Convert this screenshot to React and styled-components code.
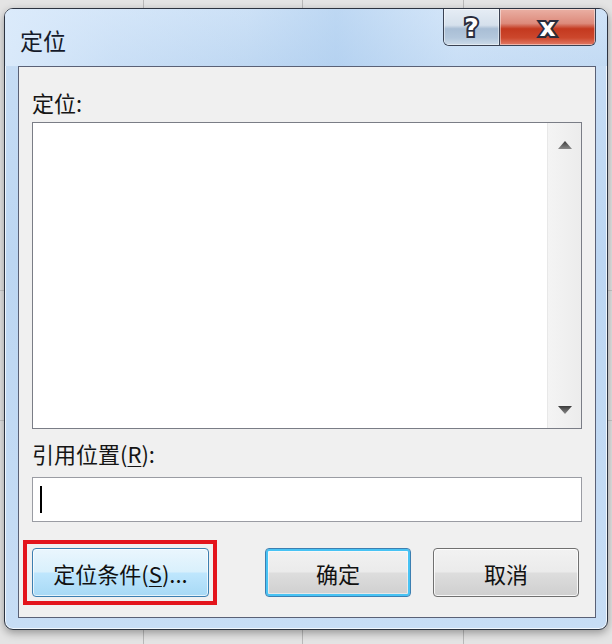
import React from "react";
import styled, { createGlobalStyle } from "styled-components";

const Global = createGlobalStyle`
  html, body { margin: 0; padding: 0; }
  body {
    font-family: "Noto Sans CJK SC", "Liberation Sans", sans-serif;
    background-color: #e4e4e4;
    background-image:
      linear-gradient(#b9b9b9, #b9b9b9),
      linear-gradient(#b9b9b9, #b9b9b9),
      linear-gradient(#b9b9b9, #b9b9b9),
      linear-gradient(#c8c8c8, #c8c8c8),
      linear-gradient(#c8c8c8, #c8c8c8);
    background-size: 1px 100%, 1px 100%, 1px 100%, 100% 1px, 100% 1px;
    background-position: 143px 0, 302px 0, 463px 0, 0 290px, 0 420px;
    background-repeat: no-repeat;
  }
`;

const Page = styled.div`
  width: 612px;
  height: 644px;
  box-sizing: border-box;
  padding: 8px 4px 0 4px;
`;

const Window = styled.div`
  width: 604px;
  height: 622px;
  box-sizing: border-box;
  border: 1px solid #2c3340;
  border-radius: 9px;
  background: linear-gradient(180deg, #c9def5 0%, #bcd6f2 40%, #c7ddf5 100%);
  box-shadow: inset 0 0 0 1px rgba(255, 255, 255, 0.75), 0 3px 8px rgba(0, 0, 0, 0.35);
  display: flex;
  flex-direction: column;
  overflow: hidden;
`;

const TitleBar = styled.div`
  height: 57px;
  flex: none;
  display: flex;
  justify-content: space-between;
  align-items: flex-start;
  background:
    linear-gradient(90deg, rgba(220, 235, 251, 0.9) 0%, rgba(214, 231, 250, 0.4) 18%, rgba(180, 209, 240, 0.2) 40%, rgba(168, 202, 238, 0.5) 55%, rgba(214, 231, 250, 0.3) 75%, rgba(196, 219, 244, 0.2) 100%),
    linear-gradient(180deg, #d3e5f8 0%, #c2daf3 100%);
`;

const Title = styled.div`
  margin: 16px 0 0 15px;
  font-size: 23px;
  line-height: 30px;
  color: #151a2a;
`;

const CaptionGroup = styled.div`
  display: flex;
  margin-right: 11px;
  border: 1px solid #3a4253;
  border-top: none;
  border-radius: 0 0 6px 6px;
  overflow: hidden;
`;

const CaptionButton = styled.div`
  width: ${(p) => p.$w}px;
  height: 36px;
  display: flex;
  align-items: center;
  justify-content: center;
  font-family: "DejaVu Sans", sans-serif;
  font-weight: bold;
  font-size: ${(p) => p.$fs}px;
  color: #ffffff;
  -webkit-text-stroke: 4px #2a2d3d;
  paint-order: stroke fill;
  border-left: ${(p) => (p.$sep ? "1px solid #3a4253" : "none")};
  box-shadow: inset 0 0 0 1px rgba(255, 255, 255, 0.45);
  background: ${(p) =>
    p.$close
      ? "linear-gradient(180deg, #eab0a4 0%, #dd8a7b 40%, #c4391f 55%, #cc472c 80%, #e27a66 100%)"
      : "linear-gradient(180deg, #e6edf5 0%, #d5e0ec 45%, #a9bed5 55%, #b3c7dc 80%, #cddbe9 100%)"};
`;

const Client = styled.div`
  flex: 1;
  margin: 0 11px 11px 13px;
  border: 1px solid #5a6176;
  background: #f0f0f0;
  padding: 20px 13px 0 13px;
  display: flex;
  flex-direction: column;
`;

const Label = styled.div`
  font-size: 22px;
  line-height: 30px;
  color: #151515;
  margin-top: ${(p) => p.$mt || 0}px;
  u { text-decoration-thickness: 1px; text-underline-offset: 3px; }
`;

const ListBox = styled.div`
  margin-top: 5px;
  height: 307px;
  box-sizing: border-box;
  border: 1px solid #7a7d86;
  background: #ffffff;
  display: flex;
  justify-content: flex-end;
`;

const ScrollBar = styled.div`
  width: 33px;
  border-left: 1px solid #e8e8e8;
  background: linear-gradient(90deg, #f4f4f4, #ececec);
  display: flex;
  flex-direction: column;
  justify-content: space-between;
  align-items: center;
  padding: 18px 0 14px 0;
`;

const Arrow = styled.svg`
  width: 14px;
  height: 8px;
  display: block;
`;

const InputBox = styled.div`
  margin-top: 9px;
  height: 45px;
  box-sizing: border-box;
  border: 1px solid #9a9ca3;
  background: #ffffff;
  display: flex;
  align-items: center;
  padding-left: 7px;
`;

const Caret = styled.div`
  width: 2px;
  height: 27px;
  background: #000;
`;

const ButtonRow = styled.div`
  margin-top: 26px;
  display: flex;
  align-items: center;
`;

const Button = styled.div`
  position: relative;
  width: ${(p) => p.$w}px;
  height: 49px;
  box-sizing: border-box;
  margin-left: ${(p) => p.$ml || 0}px;
  border-radius: 4px;
  display: flex;
  align-items: center;
  justify-content: center;
  font-size: 22px;
  color: #111;
  u { text-decoration-thickness: 1px; text-underline-offset: 3px; }
  ${(p) =>
    p.$variant === "hot"
      ? `
    border: 1px solid #3c7fb1;
    background: linear-gradient(180deg, #eaf6fd 0%, #d9f0fc 48%, #bee6fd 52%, #a7d9f5 100%);
    box-shadow: inset 0 0 0 1px rgba(255,255,255,0.7);
  `
      : p.$variant === "default"
      ? `
    border: 1px solid #3c7fb1;
    background: linear-gradient(180deg, #f2f2f2 0%, #ebebeb 48%, #dddddd 52%, #cfcfcf 100%);
    box-shadow: inset 0 0 0 2px #48c3f4, inset 0 0 0 3px rgba(255,255,255,0.5);
  `
      : `
    border: 1px solid #707070;
    background: linear-gradient(180deg, #f2f2f2 0%, #ebebeb 48%, #dddddd 52%, #cfcfcf 100%);
    box-shadow: inset 0 0 0 1px rgba(255,255,255,0.8);
  `}
`;

const Highlight = styled.span`
  position: absolute;
  top: -9px;
  left: -10px;
  right: -9px;
  bottom: -9px;
  border: 4px solid #e3141c;
  pointer-events: none;
`;

export default function App() {
  return (
    <>
      <Global />
      <Page>
        <Window>
          <TitleBar>
            <Title>定位</Title>
            <CaptionGroup>
              <CaptionButton $w={55} $fs={25}>?</CaptionButton>
              <CaptionButton $w={95} $fs={25} $close $sep>
                x
              </CaptionButton>
            </CaptionGroup>
          </TitleBar>
          <Client>
            <Label>定位:</Label>
            <ListBox>
              <ScrollBar>
                <Arrow viewBox="0 0 14 8">
                  <defs>
                    <linearGradient id="ag" x1="0" y1="0" x2="0" y2="1">
                      <stop offset="0" stopColor="#3a3a3a" />
                      <stop offset="1" stopColor="#8a8a8a" />
                    </linearGradient>
                  </defs>
                  <polygon points="7,0 14,8 0,8" fill="url(#ag)" />
                </Arrow>
                <Arrow viewBox="0 0 14 8">
                  <polygon points="0,0 14,0 7,8" fill="url(#ag)" />
                </Arrow>
              </ScrollBar>
            </ListBox>
            <Label $mt={9}>
              引用位置(<u>R</u>):
            </Label>
            <InputBox>
              <Caret />
            </InputBox>
            <ButtonRow>
              <Button $w={177} $variant="hot">
                定位条件(<u>S</u>)...
                <Highlight />
              </Button>
              <Button $w={146} $ml={56} $variant="default">
                确定
              </Button>
              <Button $w={146} $ml={22}>
                取消
              </Button>
            </ButtonRow>
          </Client>
        </Window>
      </Page>
    </>
  );
}
